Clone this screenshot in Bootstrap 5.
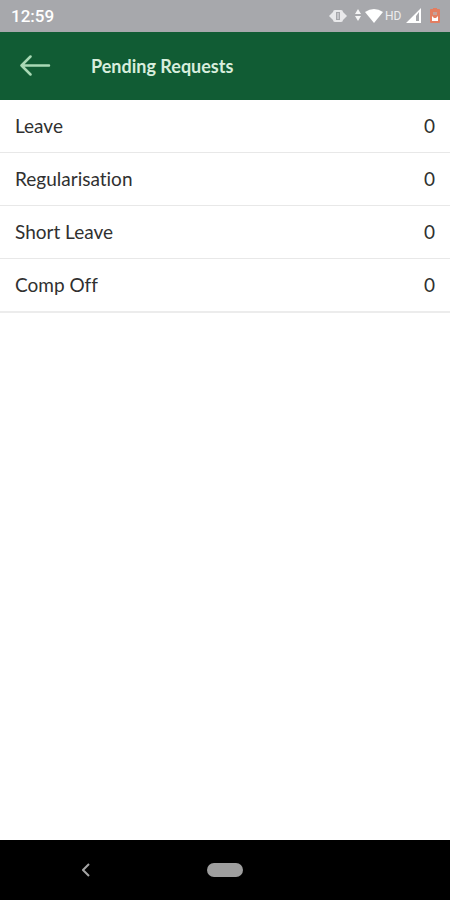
<!DOCTYPE html>
<html lang="en">
<head>
<meta charset="utf-8">
<meta name="viewport" content="width=device-width, initial-scale=1">
<title>Pending Requests</title>
<link rel="stylesheet" href="https://cdn.jsdelivr.net/npm/bootstrap@5.3.0/dist/css/bootstrap.min.css">
<style>
body { font-family: Lato, "Open Sans", sans-serif; font-size: 19px; line-height: 24px; color: #303030; font-variant-ligatures: none; }
.status-bar { background: #a7a8ac; height: 32px; padding: 0 10px 0 11px; font-family: Roboto, sans-serif; color: #fff; }
.clock { font-size: 17px; font-weight: 500; }
.hd-label { font-size: 12px; line-height: 16px; width: 17px; margin: 0 4px 0 2px; color: #ececee; }
.app-bar { background: #115c34; height: 68px; padding: 0 20px; color: #d8eedd; }
.app-title { font-size: 18px; line-height: 24px; font-weight: 700; margin-left: 40px; }
.request-list { --bs-list-group-color: #303030; --bs-list-group-border-color: #e8e8e8; --bs-list-group-item-padding-x: 15px; --bs-list-group-item-padding-y: 14px; border-bottom: 2px solid #ececec; }
.nav-keys { background: #000; height: 60px; }
.back-key { margin-left: 82px; }
.home-pill { width: 36px; height: 14px; background: #9e9e9e; }
</style>
<script defer src="https://cdn.jsdelivr.net/npm/bootstrap@5.3.0/dist/js/bootstrap.bundle.min.js"></script>
</head>
<body class="d-flex flex-column min-vh-100 bg-white">
<div class="status-bar d-flex align-items-center justify-content-between">
  <span class="clock">12:59</span>
  <div class="d-flex align-items-center">
    <svg class="me-2" width="18" height="16" viewBox="0 0 18 16" aria-hidden="true"><path d="M6 2H12Q14 2 14 4L18 8L14 12Q14 14 12 14H6Q4 14 4 12L0 8L4 4Q4 2 6 2Z" fill="#e9e9eb"/><path d="M7 4H11V12H7Z" fill="#a7a8ac"/><path d="M8 5H10V11H8Z" fill="#c6c6ca"/></svg>
    <svg width="6" height="16" viewBox="0 0 6 16" aria-hidden="true"><path d="M0 6L3 1L6 6ZM0 8H6L3 13Z" fill="#f5f5f6"/></svg>
    <svg class="ms-1" width="18" height="16" viewBox="0 0 18 16" aria-hidden="true"><path d="M0 4Q9-2 18 4L9 15Z" fill="#fff"/></svg>
    <span class="hd-label">HD</span>
    <svg class="me-2" width="16" height="16" viewBox="0 0 16 16" aria-hidden="true"><path fill-rule="evenodd" d="M0 15L15 0V15ZM10 8V13H13V4Z" fill="#fff"/></svg>
    <svg width="10" height="16" viewBox="0 0 10 16" aria-hidden="true"><path d="M3 0H7V1H9Q10 1 10 2V14Q10 15 9 15H1Q0 15 0 14V2Q0 1 1 1H3Z" fill="#e37e61"/><path d="M3 4H7V7H3Z" fill="#c5a19a"/><path d="M2 8L4 10H6L8 8V13H2Z" fill="#fff"/></svg>
  </div>
</div>
<header class="app-bar d-flex align-items-center">
  <button type="button" class="btn p-0 border-0 d-flex" aria-label="Back"><svg width="31" height="22" viewBox="0 0 31 22" fill="none" stroke="#a9d9b5" stroke-width="2.500" stroke-linecap="round" stroke-linejoin="round" aria-hidden="true"><path d="M29 10.500H1.500M10.500 1.500L1.500 10.500L10.500 19.500"/></svg></button>
  <h1 class="app-title mb-0">Pending Requests</h1>
</header>
<main class="flex-grow-1">
  <ul class="request-list list-group list-group-flush">
    <li class="list-group-item d-flex justify-content-between"><span>Leave</span><span>0</span></li>
    <li class="list-group-item d-flex justify-content-between"><span>Regularisation</span><span>0</span></li>
    <li class="list-group-item d-flex justify-content-between"><span>Short Leave</span><span>0</span></li>
    <li class="list-group-item d-flex justify-content-between"><span>Comp Off</span><span>0</span></li>
  </ul>
</main>
<nav class="nav-keys row g-0 align-items-center" aria-label="System">
  <div class="col d-flex"><button type="button" class="back-key btn p-0 border-0 d-flex" aria-label="System back"><svg width="8" height="14" viewBox="0 0 8 14" fill="none" stroke="#a4a4a4" stroke-width="2" aria-hidden="true"><path d="M7 1L1 7L7 13"/></svg></button></div>
  <div class="col-auto d-flex"><button type="button" class="home-pill btn p-0 border-0 rounded-pill" aria-label="Home"></button></div>
  <div class="col"></div>
</nav>
</body>
</html>
